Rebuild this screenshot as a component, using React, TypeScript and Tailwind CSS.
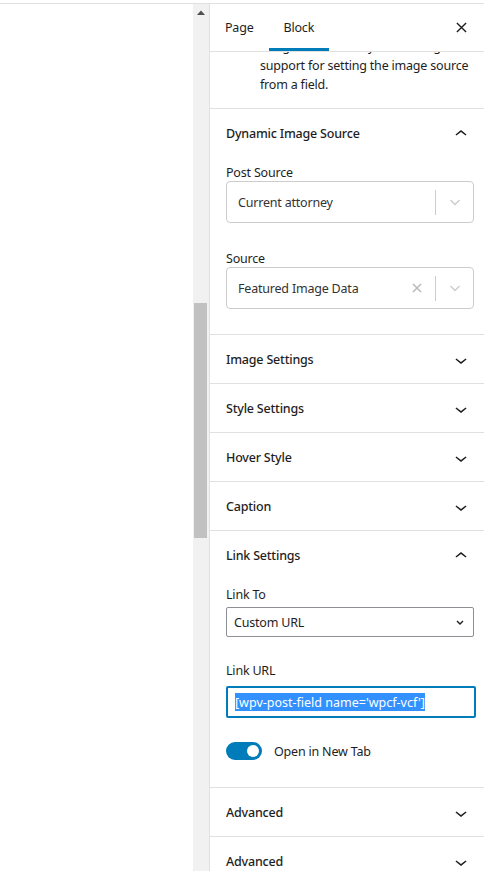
import React from "react";

const ChevronDown = () => (
  <svg width="24" height="24" viewBox="0 0 24 24" fill="#1e1e1e">
    <path d="M17.5 11.6L12 16l-5.5-4.4.9-1.2L12 14l4.6-3.6 1 1.2z" />
  </svg>
);
const ChevronUp = () => (
  <svg width="24" height="24" viewBox="0 0 24 24" fill="#1e1e1e">
    <path d="M6.5 12.4L12 8l5.5 4.4-.9 1.2L12 10l-4.6 3.6-1-1.2z" />
  </svg>
);

const SelectChevron = () => (
  <svg width="14" height="14" viewBox="0 0 14 14" fill="none" stroke="#cccccc" strokeWidth="1.4">
    <path d="M2.5 5l4.5 4.5L11.5 5" />
  </svg>
);

const SectionHeader = ({ title, open }: { title: string; open?: boolean }) => (
  <div className="h-[48px] flex items-center justify-between pl-[16px] pr-[11px]">
    <span className="font-medium pt-[3px]">{title}</span>
    <span className="pt-[2px]">{open ? <ChevronUp /> : <ChevronDown />}</span>
  </div>
);

const Collapsed = ({ title }: { title: string }) => (
  <div className="border-t border-[#e0e0e0]">
    <SectionHeader title={title} />
  </div>
);

export default function App() {
  return (
    <div className="w-[484px] h-[871px] overflow-hidden bg-white pt-[3px] font-['Noto_Sans',sans-serif] text-[12.5px] tracking-[-0.2px] text-[#1e1e1e]">
      <div className="flex h-[868px] border-t border-[#e0e0e0]">
        <div className="w-[193px]" />
        <div className="w-[16px] bg-[#f1f1f1] flex flex-col">
          <div className="h-[17px] flex items-center justify-center">
            <svg width="8" height="5" viewBox="0 0 8 5">
              <path d="M0 5L4 0.5L8 5z" fill="#505050" />
            </svg>
          </div>
          <div className="mt-[282px] ml-[1px] w-[13px] h-[235px] bg-[#c1c1c1]" />
        </div>
        <div className="flex-1 border-l border-[#e0e0e0] flex flex-col min-w-0">
          <div className="h-[48px] border-b border-[#e0e0e0] flex items-stretch">
            <div className="px-[15px] pt-[5px] flex items-center border-b-[3px] border-transparent">Page</div>
            <div className="px-[15px] pt-[5px] flex items-center border-b-[3px] border-[#007cba]">Block</div>
            <div className="ml-auto mr-[11px] w-[24px] flex items-center justify-center">
              <svg width="11" height="11" viewBox="0 0 12 12" stroke="#1e1e1e" strokeWidth="1.5">
                <path d="M1 1L11 11M11 1L1 11" />
              </svg>
            </div>
          </div>
          <div className="flex-1 overflow-hidden">
            <div className="-mt-[15px] pl-[50px] pr-[10px] pb-[14px] leading-[19px] whitespace-nowrap">
              <div>Image block with dynamic image</div>
              <div>support for setting the image source</div>
              <div>from a field.</div>
            </div>

            <div className="border-t border-[#e0e0e0]">
              <SectionHeader title="Dynamic Image Source" open />
              <div className="pl-[16px] pr-[10px] pt-[6px] pb-[25px]">
                <div className="h-[18px] leading-[18px] pt-[1px]">Post Source</div>
                <div className="h-[42px] border border-[#cccccc] rounded-[4px] flex items-center">
                  <span className="pl-[11px] pt-[2px] flex-1 text-[#333333]">Current attorney</span>
                  <div className="w-px h-[25px] bg-[#cccccc]" />
                  <div className="w-[37px] flex items-center justify-center">
                    <SelectChevron />
                  </div>
                </div>
                <div className="mt-[26px] h-[18px] leading-[18px] pt-[1px]">Source</div>
                <div className="h-[42px] border border-[#cccccc] rounded-[4px] flex items-center">
                  <span className="pl-[11px] pt-[2px] flex-1 text-[#333333]">Featured Image Data</span>
                  <div className="w-[36px] flex items-center justify-center">
                    <svg width="10" height="10" viewBox="0 0 10 10" stroke="#bbbbbb" strokeWidth="1.6">
                      <path d="M1 1L9 9M9 1L1 9" />
                    </svg>
                  </div>
                  <div className="w-px h-[25px] bg-[#cccccc]" />
                  <div className="w-[37px] flex items-center justify-center">
                    <SelectChevron />
                  </div>
                </div>
              </div>
            </div>

            <Collapsed title="Image Settings" />
            <Collapsed title="Style Settings" />
            <Collapsed title="Hover Style" />
            <Collapsed title="Caption" />

            <div className="border-t border-[#e0e0e0]">
              <SectionHeader title="Link Settings" open />
              <div className="pl-[16px] pr-[10px] pt-[6px] pb-[27px]">
                <div className="h-[18px] leading-[18px] pt-[1px]">Link To</div>
                <div className="mt-[4px] h-[30px] border border-[#8c8f94] rounded-[2px] flex items-center">
                  <span className="pl-[7px] pt-[2px] flex-1">Custom URL</span>
                  <div className="w-[24px] flex items-center justify-center mr-[1px]">
                    <svg width="10" height="10" viewBox="0 0 10 10" fill="none" stroke="#1e1e1e" strokeWidth="1.4">
                      <path d="M2 4l3 3 3-3" />
                    </svg>
                  </div>
                </div>
                <div className="mt-[24px] h-[18px] leading-[18px] pt-[1px]">Link URL</div>
                <div className="mt-[7px] h-[32px] -mr-[2px] border-2 border-[#007cba] rounded-[2px] flex items-center pl-[7px]">
                  <span className="bg-[#3390ff] text-white leading-[17px] pt-[1px] tracking-normal whitespace-nowrap">[wpv-post-field name='wpcf-vcf']</span>
                </div>
                <div className="mt-[24px] h-[18px] flex items-center">
                  <div className="w-[36px] h-[18px] rounded-full bg-[#007cba] flex items-center justify-end pr-[3px]">
                    <div className="w-[12px] h-[12px] rounded-full bg-white" />
                  </div>
                  <span className="ml-[12px] pt-[2px] leading-[16px]">Open in New Tab</span>
                </div>
              </div>
            </div>

            <Collapsed title="Advanced" />
            <Collapsed title="Advanced" />
          </div>
        </div>
      </div>
    </div>
  );
}
